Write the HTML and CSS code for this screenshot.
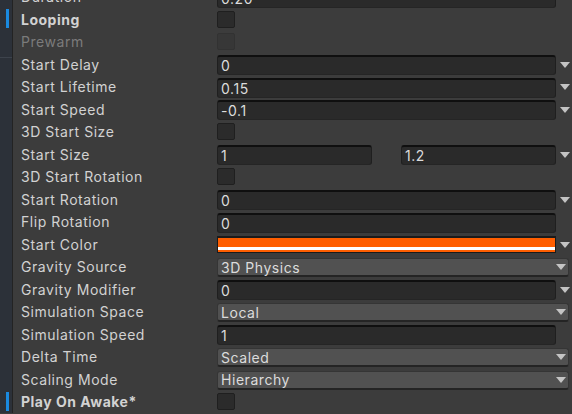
FILE: index.html
```html
<!DOCTYPE html>
<html>
<head>
<meta charset="utf-8">
<link rel="stylesheet" href="styles.css">
</head>
<body>
<div class="panel">
  <div class="gutter">
    <div class="gcell"></div>
    <div class="gcell"><span class="mark"></span></div>
    <div class="gcell"></div><div class="gcell"></div><div class="gcell"></div><div class="gcell"></div>
    <div class="gcell"></div><div class="gcell"></div><div class="gcell"></div><div class="gcell"></div>
    <div class="gcell"></div><div class="gcell"></div><div class="gcell"></div><div class="gcell"></div>
    <div class="gcell"></div><div class="gcell"></div><div class="gcell"></div><div class="gcell"></div>
    <div class="gcell"><span class="mark"></span></div>
  </div>
  <div class="rows">
    <div class="row"><span class="label">Duration</span><div class="field"><span>0.20</span></div></div>
    <div class="row"><span class="label bold">Looping</span><div class="check"></div></div>
    <div class="row"><span class="label dim">Prewarm</span><div class="check off"></div></div>
    <div class="row"><span class="label">Start Delay</span><div class="field"><span>0</span></div><span class="arrow"></span></div>
    <div class="row"><span class="label">Start Lifetime</span><div class="field"><span>0.15</span></div><span class="arrow"></span></div>
    <div class="row"><span class="label">Start Speed</span><div class="field"><span>-0.1</span></div><span class="arrow"></span></div>
    <div class="row"><span class="label">3D Start Size</span><div class="check"></div></div>
    <div class="row"><span class="label">Start Size</span><div class="pair"><div class="field half"><span>1</span></div><div class="field half"><span>1.2</span></div></div><span class="arrow"></span></div>
    <div class="row"><span class="label">3D Start Rotation</span><div class="check"></div></div>
    <div class="row"><span class="label">Start Rotation</span><div class="field"><span>0</span></div><span class="arrow"></span></div>
    <div class="row"><span class="label">Flip Rotation</span><div class="field"><span>0</span></div></div>
    <div class="row"><span class="label">Start Color</span><div class="color"><div class="swatch"></div><div class="alpha"></div><div class="swatch2"></div></div><span class="arrow"></span></div>
    <div class="row"><span class="label">Gravity Source</span><div class="popup"><span>3D Physics</span><span class="parrow"></span></div></div>
    <div class="row"><span class="label">Gravity Modifier</span><div class="field"><span>0</span></div><span class="arrow"></span></div>
    <div class="row"><span class="label">Simulation Space</span><div class="popup"><span>Local</span><span class="parrow"></span></div></div>
    <div class="row"><span class="label">Simulation Speed</span><div class="field"><span>1</span></div></div>
    <div class="row"><span class="label">Delta Time</span><div class="popup"><span>Scaled</span><span class="parrow"></span></div></div>
    <div class="row"><span class="label">Scaling Mode</span><div class="popup"><span>Hierarchy</span><span class="parrow"></span></div></div>
    <div class="row"><span class="label bold">Play On Awake*</span><div class="check"></div></div>
  </div>
</div>
</body>
</html>
```
FILE: styles.css
```css
html, body {
  margin: 0;
  padding: 0;
  background: #3c3c3c;
  overflow: hidden;
}
body {
  width: 572px;
  height: 414px;
  font-family: Inter, "Noto Sans", sans-serif;
  font-size: 14px;
  letter-spacing: 0.55px;
  color: #d2d2d2;
}
.panel {
  display: flex;
  margin-top: -14.5px;
}
.gutter {
  width: 12px;
  flex: none;
  background: #2c3139 linear-gradient(to bottom, transparent 71px, #3d434c 71px, #3d434c 72px, transparent 72px);
  border-right: 1px solid #232323;
  display: flex;
  flex-direction: column;
}
.gcell {
  height: 22.5px;
  position: relative;
}
.mark {
  display: block;
  margin-left: 6px;
  margin-top: 1px;
  width: 3px;
  height: 19px;
  background: #1a8ae0;
}
.rows {
  display: flex;
  flex-direction: column;
}
.row {
  height: 22.5px;
  display: flex;
  align-items: center;
  padding-left: 8px;
}
.label {
  width: 196px;
  flex: none;
  white-space: nowrap;
  color: #d2d2d2;
}
.label.bold { font-weight: 700; letter-spacing: 0.5px; }
.label.dim { color: #7b7b7b; }

.field {
  box-sizing: border-box;
  width: 339px;
  height: 20px;
  margin-top: 2px;
  background: #2a2a2a;
  border: 1px solid #1f1f1f;
  border-top: 2px solid #0f0f0f;
  border-bottom-color: #252525;
  border-radius: 3px;
  padding-left: 3px;
  display: flex;
  align-items: center;
  color: #dcdcdc;
}
.pair {
  width: 339px;
  display: flex;
  justify-content: space-between;
}
.field.half { width: 155px; }

.arrow {
  margin-left: 4px;
  margin-top: 1px;
  width: 0;
  height: 0;
  border-left: 5.5px solid transparent;
  border-right: 5.5px solid transparent;
  border-top: 6px solid #c4c4c4;
}
.check {
  box-sizing: border-box;
  width: 18px;
  height: 17px;
  background: #2b2b2b;
  border: 1px solid #1f1f1f;
  border-radius: 2px;
}
.check.off {
  background: #373737;
  border-color: #323232;
}
.color {
  box-sizing: border-box;
  width: 339px;
  height: 17px;
  margin-top: 1px;
  border: 1px solid #1b1b1b;
  border-top-width: 2px;
  display: flex;
  flex-direction: column;
}
.swatch { height: 9px; background: #ff5e00; }
.alpha { height: 3px; background: #ffffff; }
.swatch2 { flex: 1; background: #ff5e00; }

.popup {
  box-sizing: border-box;
  width: 352px;
  height: 19px;
  margin-top: 2px;
  background: #515151;
  border: 1px solid #353535;
  border-bottom: 2px solid #242424;
  border-radius: 3px;
  padding-left: 3px;
  padding-right: 2px;
  display: flex;
  align-items: center;
  justify-content: space-between;
  color: #dcdcdc;
}
.parrow {
  width: 0;
  height: 0;
  border-left: 5.5px solid transparent;
  border-right: 5.5px solid transparent;
  border-top: 6px solid #c4c4c4;
}
```
